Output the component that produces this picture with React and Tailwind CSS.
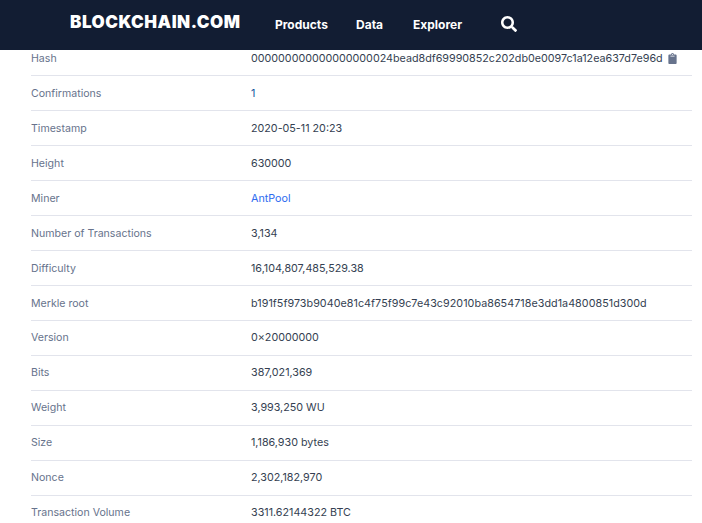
import { FaClipboard, FaSearch } from "react-icons/fa";

const rows = [
  { label: "Hash", value: "000000000000000000024bead8df69990852c202db0e0097c1a12ea637d7e96d", copy: true, first: true },
  { label: "Confirmations", value: "1", color: "text-[#14549e]", down: true },
  { label: "Timestamp", value: "2020-05-11 20:23", down: true },
  { label: "Height", value: "630000", down: true },
  { label: "Miner", value: "AntPool", color: "text-[#2e6bf0]", down: true },
  { label: "Number of Transactions", value: "3,134", down: true },
  { label: "Difficulty", value: "16,104,807,485,529.38", down: true },
  { label: "Merkle root", value: "b191f5f973b9040e81c4f75f99c7e43c92010ba8654718e3dd1a4800851d300d", down: true, wide: true },
  { label: "Version", value: "0×20000000" },
  { label: "Bits", value: "387,021,369" },
  { label: "Weight", value: "3,993,250 WU" },
  { label: "Size", value: "1,186,930 bytes" },
  { label: "Nonce", value: "2,302,182,970" },
  { label: "Transaction Volume", value: "3311.62144322 BTC" },
];

const Header = () => (
  <header className="flex h-[50px] items-center bg-[#121d33] pl-[70px] text-white">
    <span className="w-[205px] pb-[6px] font-['Inter',sans-serif] text-[17px] font-black leading-none tracking-[0.52px]">BLOCKCHAIN.COM</span>
    <nav className="flex items-center text-[12px] font-bold">
      <span className="w-[81px]">Products</span>
      <span className="w-[57px]">Data</span>
      <span className="w-[88px]">Explorer</span>
    </nav>
    <FaSearch size={16} className="mb-[3px]" />
  </header>
);

const App = () => {
  return (
    <div className="h-[523px] overflow-hidden bg-white font-['Inter',sans-serif] text-[10.74px]">
      <Header />
      <div className="pl-[31px] pr-[10px]">
        {rows.map((row) => (
          <div
            key={row.label}
            className={`flex items-center border-b border-[#e2e4ec] ${row.first ? "h-[26px] pb-[7px]" : "h-[35px]"} ${row.down ? "pt-[2px]" : ""}`}
          >
            <div className="w-[220px] text-[10.6px] text-[#67738c]">{row.label}</div>
            <div className={`flex items-center ${row.color || "text-[#353f52]"} ${row.wide ? "tracking-[0.05px]" : ""}`}>
              {row.value}
              {row.copy && <FaClipboard size={11} className="mb-[2px] ml-[4px] text-[#67738c]" />}
            </div>
          </div>
        ))}
      </div>
    </div>
  );
};

export default App;
